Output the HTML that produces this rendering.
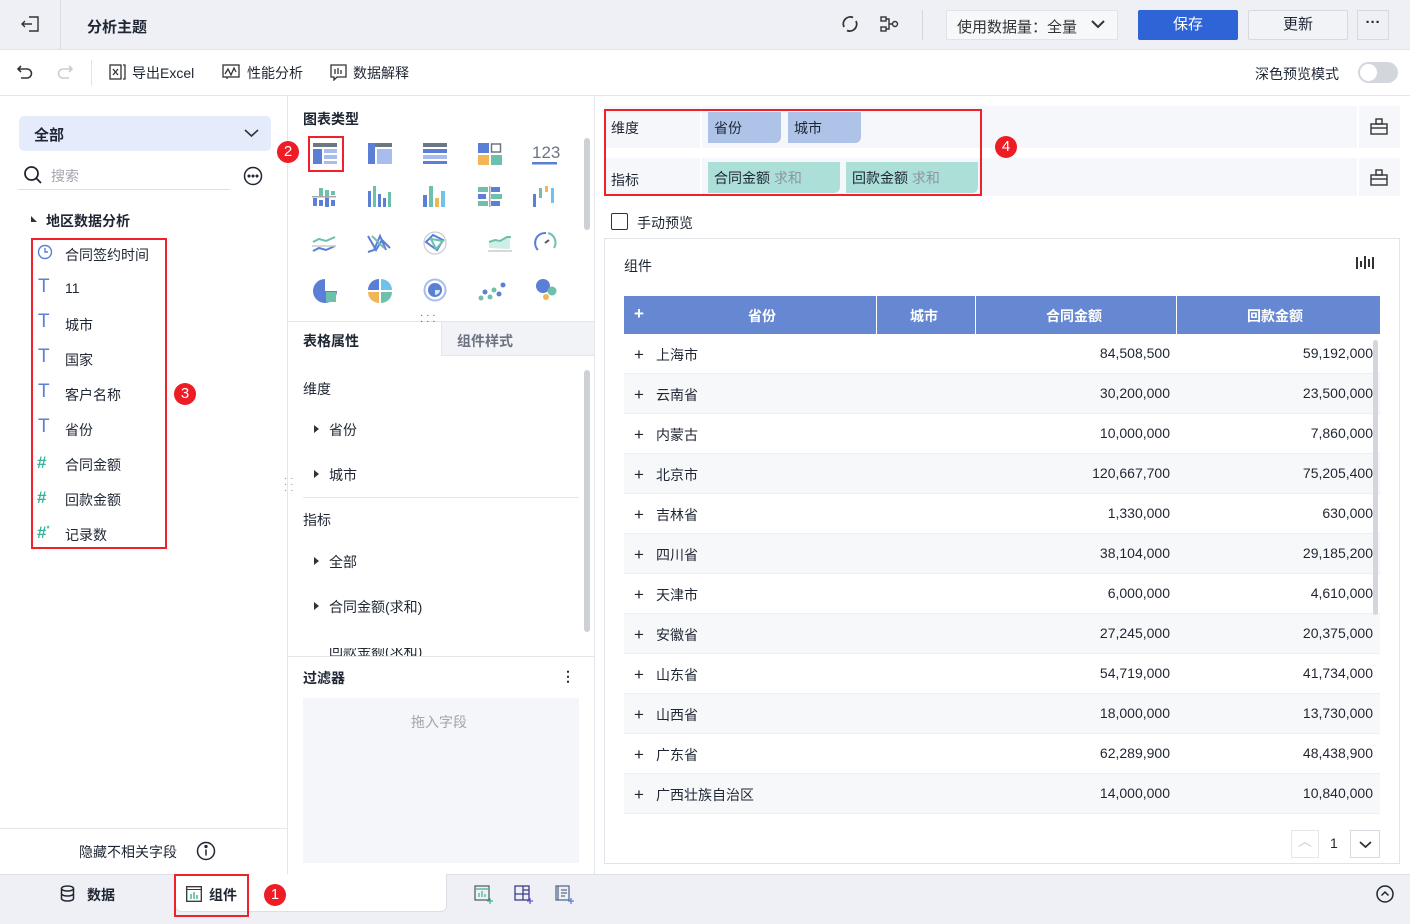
<!DOCTYPE html>
<html><head><meta charset="utf-8"><style>
*{box-sizing:border-box;margin:0;padding:0}
body{width:1410px;height:924px;position:relative;overflow:hidden;background:#fff;font-family:"Liberation Sans","Noto Sans CJK SC",sans-serif;font-size:14px;color:#1f2633}
.a{position:absolute}
.b{font-weight:bold}
.red{border:2px solid #f0212b}
.badge{position:absolute;width:22px;height:22px;border-radius:50%;background:#ee1c25;color:#fff;font-size:15px;text-align:center;line-height:22px}
.row{position:absolute;left:624px;width:756px;height:40px;border-bottom:1px solid #eceef2}
.row span{position:absolute;top:11px}
.row .p{left:10px;font-size:17px;line-height:18px;top:12px}
.row .n{left:32px}
</style></head><body>
<div class="a" style="left:0;top:0;width:1410px;height:50px;background:#eef0f5;border-bottom:1px solid #e0e3ea"></div>
<div class="a" style="left:60px;top:0;width:1px;height:50px;background:#d9dce3"></div>
<svg class="a" style="left:20px;top:14px" width="22" height="20" viewBox="0 0 22 20" fill="none" stroke="#333" stroke-width="1.4"><path d="M9 3h9v14H9M12 10H2M5 7l-3 3 3 3"/></svg>
<div class="a b" style="left:87px;top:16px;font-size:15px">分析主题</div>
<svg class="a" style="left:840px;top:14px" width="20" height="20" viewBox="0 0 20 20" fill="none" stroke="#333" stroke-width="1.8"><path d="M4 13A7 7 0 0 1 13 3.5M16 7A7 7 0 0 1 7 16.5"/></svg>
<svg class="a" style="left:880px;top:15px" width="20" height="18" viewBox="0 0 20 18" fill="none" stroke="#333" stroke-width="1.4"><rect x="1" y="2" width="5" height="4"/><rect x="1" y="12" width="5" height="4"/><circle cx="15" cy="9" r="2.5"/><path d="M6 4h3v10H6M9 9h3.5"/></svg>
<div class="a" style="left:922px;top:10px;width:1px;height:30px;background:#d3d6dd"></div>
<div class="a" style="left:946px;top:10px;width:172px;height:30px;background:#f7f8fa;border:1px solid #dfe2e8;border-radius:2px;padding:5px 10px;font-size:15px;color:#333">使用数据量：全量<svg style="position:absolute;right:12px;top:9px" width="14" height="9" viewBox="0 0 14 9" fill="none" stroke="#333" stroke-width="2"><path d="M1 1l6 6 6-6"/></svg></div>
<div class="a" style="left:1138px;top:10px;width:100px;height:30px;background:#2f64d7;border-radius:2px;color:#fff;text-align:center;line-height:30px;font-size:15px">保存</div>
<div class="a" style="left:1248px;top:10px;width:100px;height:30px;background:#f2f3f6;border:1px solid #d6d9df;border-radius:2px;text-align:center;line-height:28px;font-size:15px">更新</div>
<div class="a" style="left:1357px;top:10px;width:32px;height:30px;border:1px solid #d6d9df;text-align:center;line-height:24px;font-size:15px;font-weight:bold">···</div>
<div class="a" style="left:0;top:95px;width:1410px;height:1px;background:#e4e6eb"></div>
<svg class="a" style="left:16px;top:64px" width="18" height="16" viewBox="0 0 18 16" fill="none" stroke="#333" stroke-width="1.6"><path d="M5 2L2 5l3 3M2 5h9a4.5 4.5 0 0 1 0 9H5"/></svg>
<svg class="a" style="left:56px;top:64px" width="18" height="16" viewBox="0 0 18 16" fill="none" stroke="#c8ccd3" stroke-width="1.6"><path d="M13 2l3 3-3 3M16 5H7a4.5 4.5 0 0 0 0 9h6"/></svg>
<div class="a" style="left:91px;top:60px;width:1px;height:26px;background:#e1e3e8"></div>
<svg class="a" style="left:109px;top:64px" width="17" height="16" viewBox="0 0 17 16" fill="none" stroke="#333" stroke-width="1.3"><rect x="1" y="1" width="11" height="14"/><path d="M4 5l5 6M9 5l-5 6M14 1h2v14h-2"/></svg>
<div class="a" style="left:132px;top:63px">导出Excel</div>
<svg class="a" style="left:222px;top:64px" width="18" height="16" viewBox="0 0 18 16" fill="none" stroke="#333" stroke-width="1.3"><rect x="1" y="1" width="16" height="12"/><path d="M3 10l3-5 3 6 3-7 2 4M5 13v2"/></svg>
<div class="a" style="left:247px;top:63px">性能分析</div>
<svg class="a" style="left:330px;top:64px" width="17" height="17" viewBox="0 0 17 17" fill="none" stroke="#333" stroke-width="1.3"><path d="M1 1h15v12H7l-3 3v-3H1z"/><path d="M5 5v5M8 4v6M11 6v4"/></svg>
<div class="a" style="left:353px;top:63px">数据解释</div>
<div class="a" style="left:1255px;top:64px">深色预览模式</div>
<div class="a" style="left:1358px;top:62px;width:40px;height:21px;border-radius:11px;background:#d3d6dc"><div style="position:absolute;left:2px;top:2px;width:17px;height:17px;border-radius:50%;background:#fff"></div></div>
<div class="a" style="left:287px;top:96px;width:1px;height:778px;background:#e4e6eb"></div>
<div class="a" style="left:19px;top:116px;width:252px;height:35px;background:#e4ecfb;border-radius:5px"></div>
<div class="a b" style="left:34px;top:124px;font-size:15px">全部</div>
<svg class="a" style="left:244px;top:129px" width="15" height="9" viewBox="0 0 15 9" fill="none" stroke="#333" stroke-width="1.6"><path d="M1 1l6.5 6 6.5-6"/></svg>
<svg class="a" style="left:23px;top:165px" width="20" height="20" viewBox="0 0 20 20" fill="none" stroke="#1f2633" stroke-width="1.8"><circle cx="8.5" cy="8.5" r="6.5"/><path d="M13 13l5 5"/></svg>
<div class="a" style="left:51px;top:166px;color:#a0a5ae">搜索</div>
<div class="a" style="left:18px;top:189px;width:212px;height:1px;background:#dde0e6"></div>
<svg class="a" style="left:243px;top:166px" width="20" height="20" viewBox="0 0 20 20" fill="none" stroke="#1f2633" stroke-width="1.5"><circle cx="10" cy="10" r="8.5"/><circle cx="6" cy="10" r=".8" fill="#1f2633"/><circle cx="10" cy="10" r=".8" fill="#1f2633"/><circle cx="14" cy="10" r=".8" fill="#1f2633"/></svg>
<div class="a" style="left:31px;top:216px;width:0;height:0;border-left:6px solid #333;border-top:6px solid transparent"></div>
<div class="a b" style="left:46px;top:211px">地区数据分析</div>
<div class="a red" style="left:31px;top:238px;width:136px;height:311px"></div>
<svg class="a" style="left:37px;top:244px" width="16" height="16" viewBox="0 0 16 16" fill="none" stroke="#5b7fd6" stroke-width="1.4"><circle cx="8" cy="8" r="6.5"/><path d="M8 4v4h3"/></svg>
<div class="a" style="left:65px;top:245px">合同签约时间</div>
<div class="a" style="left:38px;top:276px;color:#5b7fd6;font-size:19px">T</div><div class="a" style="left:65px;top:280px">11</div>
<div class="a" style="left:38px;top:311px;color:#5b7fd6;font-size:19px">T</div><div class="a" style="left:65px;top:315px">城市</div>
<div class="a" style="left:38px;top:346px;color:#5b7fd6;font-size:19px">T</div><div class="a" style="left:65px;top:350px">国家</div>
<div class="a" style="left:38px;top:381px;color:#5b7fd6;font-size:19px">T</div><div class="a" style="left:65px;top:385px">客户名称</div>
<div class="a" style="left:38px;top:416px;color:#5b7fd6;font-size:19px">T</div><div class="a" style="left:65px;top:420px">省份</div>
<div class="a b" style="left:37px;top:453px;color:#3bb39a;font-size:17px">#</div><div class="a" style="left:65px;top:455px">合同金额</div>
<div class="a b" style="left:37px;top:488px;color:#3bb39a;font-size:17px">#</div><div class="a" style="left:65px;top:490px">回款金额</div>
<div class="a b" style="left:37px;top:523px;color:#3bb39a;font-size:17px">#<sup style="font-size:8px">*</sup></div><div class="a" style="left:65px;top:525px">记录数</div>
<div class="badge" style="left:174px;top:383px">3</div>
<div class="a" style="left:284px;top:476px;color:#888;font-size:10px;line-height:6px">· ·<br>· ·<br>· ·</div>
<div class="a" style="left:0;top:828px;width:287px;height:1px;background:#e4e6eb"></div>
<div class="a" style="left:79px;top:842px">隐藏不相关字段</div>
<svg class="a" style="left:196px;top:841px" width="20" height="20" viewBox="0 0 20 20" fill="none" stroke="#1f2633" stroke-width="1.5"><circle cx="10" cy="10" r="8.5"/><path d="M10 8.5v6"/><circle cx="10" cy="5.5" r=".9" fill="#1f2633"/></svg>
<div class="a" style="left:594px;top:96px;width:1px;height:778px;background:#e4e6eb"></div>
<div class="a b" style="left:303px;top:109px">图表类型</div>
<div class="a red" style="left:308px;top:136px;width:36px;height:36px"></div>
<div class="badge" style="left:277px;top:141px">2</div>
<svg class="a" style="left:300px;top:136px" width="270" height="170" viewBox="0 0 270 170">
<g transform="translate(13,7)"><rect width="24" height="4" fill="#6d7685"/><rect y="6" width="9" height="15" fill="#5b7fd6"/><rect x="11" y="6" width="13" height="4" fill="#a8bdee"/><rect x="11" y="12" width="13" height="4" fill="#a8bdee"/><rect x="11" y="18" width="13" height="3" fill="#a8bdee"/></g>
<g transform="translate(68,7)"><rect width="24" height="4" fill="#6d7685"/><rect width="7" height="21" fill="#5b7fd6"/><rect x="9" y="6" width="15" height="15" fill="#a8bdee"/></g>
<g transform="translate(123,7)"><rect width="24" height="4" fill="#6d7685"/><rect y="6" width="24" height="4" fill="#5b7fd6"/><rect y="12" width="24" height="4" fill="#a8bdee"/><rect y="18" width="24" height="3" fill="#5b7fd6"/></g>
<g transform="translate(178,7)"><rect width="11" height="10" fill="#5b7fd6"/><rect x="13.5" y="1" width="9" height="8" fill="none" stroke="#6d7685" stroke-width="1.5"/><rect y="12" width="11" height="10" fill="#f0b658"/><rect x="13" y="12" width="11" height="10" fill="#6cc0ac"/></g>
<text x="232" y="22" font-size="17" fill="#6d7685" font-family="Liberation Sans">123</text><rect x="232" y="26" width="25" height="2.5" fill="#5b7fd6"/>
<g transform="translate(13,50)" fill="#5b7fd6"><rect x="0" y="12" width="4" height="8"/><rect x="6" y="2" width="4" height="8" fill="#6cc0ac"/><rect x="12" y="4" width="4" height="8" fill="#6cc0ac"/><rect x="12" y="12" width="4" height="9"/><rect x="6" y="14" width="4" height="6"/><rect x="-1" y="10" width="24" height="1.5" fill="#aaa"/><rect x="18" y="5" width="4" height="4" fill="#6cc0ac"/><rect x="18" y="14" width="4" height="6"/></g>
<g transform="translate(68,50)"><rect x="0" y="5" width="3" height="16" fill="#5b7fd6"/><rect x="5" y="0" width="3" height="21" fill="#6cc0ac"/><rect x="10" y="8" width="3" height="13" fill="#5b7fd6"/><rect x="15" y="12" width="3" height="9" fill="#5b7fd6"/><rect x="20" y="6" width="3" height="15" fill="#6cc0ac"/></g>
<g transform="translate(123,50)"><rect x="0" y="9" width="4" height="12" fill="#5b7fd6"/><rect x="6" y="0" width="4" height="21" fill="#6cc0ac"/><rect x="12" y="12" width="4" height="9" fill="#f0b658"/><rect x="18" y="5" width="4" height="16" fill="#6fc3ea"/></g>
<g transform="translate(178,51)"><rect width="10" height="5" fill="#6cc0ac"/><rect x="13" width="9" height="5" fill="#5b7fd6"/><rect y="7" width="8" height="5" fill="#5b7fd6"/><rect x="13" y="7" width="11" height="5" fill="#6cc0ac"/><rect y="14" width="10" height="5" fill="#6cc0ac"/><rect x="13" y="14" width="9" height="5" fill="#5b7fd6"/><rect x="11" y="-1" width="1.5" height="21" fill="#aaa"/></g>
<g transform="translate(233,50)"><rect x="0" y="8" width="3" height="13" fill="#5b7fd6"/><rect x="6" y="2" width="3" height="10" fill="#6cc0ac"/><rect x="12" y="0" width="3" height="6" fill="#f0b658"/><rect x="18" y="2" width="3" height="15" fill="#6fc3ea"/></g>
<g fill="none" stroke-width="2"><path d="M13 106l6-3 7 2 9-4" stroke="#6cc0ac"/><path d="M13 115l6-3 7 2 9-4" stroke="#5b7fd6"/><path d="M12 110h24" stroke="#ccc" stroke-width="1.5"/>
<path d="M68 100l8 14 6-10 8 8M68 116l6-2 6-14 6 14" stroke="#5b7fd6"/><path d="M72 100l12 12" stroke="#6cc0ac"/>
<circle cx="135" cy="107" r="11" stroke="#ccc" stroke-width="1.2"/><path d="M126 106l7-7 10 5-6 10z" stroke="#5b7fd6"/><path d="M131 103l12 2-7 8z" stroke="#6cc0ac"/>
<path d="M189 112v-5l5-2 5 1 7-4 4 0v11z" fill="#cfeee6" stroke="none"/><path d="M189 106l6-2 5 1 7-4 4 0" stroke="#6cc0ac"/><path d="M188 115h24" stroke="#ccc" stroke-width="1.5"/>
<path d="M238 114a10 10 0 0 1 8-17" stroke="#5b7fd6"/><path d="M248 97a10 10 0 0 1 6 15" stroke="#6cc0ac"/><path d="M245 107l4-3" stroke="#555"/></g>
<g transform="translate(13,143)"><path d="M12 0A12 12 0 1 0 24 12H12z" fill="#5b7fd6"/><rect x="13" y="13" width="10" height="10" fill="#6cc0ac"/></g>
<g transform="translate(68,143)"><path d="M11 0v11H0A11 11 0 0 1 11 0" fill="#5b7fd6"/><path d="M13 0a11 11 0 0 1 11 11H13z" fill="#6fc3ea"/><path d="M0 13h11v11A11 11 0 0 1 0 13" fill="#f0b658"/><path d="M13 13h11a11 11 0 0 1-11 11z" fill="#6cc0ac"/></g>
<g transform="translate(124,143)" fill="none"><circle cx="11" cy="11" r="10.5" stroke="#a8bdee" stroke-width="2"/><circle cx="11" cy="11" r="7" fill="#5b7fd6"/><path d="M11 11h5a5 5 0 0 1-5 5z" fill="#cfeee6"/></g>
<g fill="#5b7fd6"><circle cx="181" cy="162" r="2.5" fill="#6cc0ac"/><circle cx="185" cy="156" r="2.5"/><circle cx="190" cy="161" r="2.5" fill="#6cc0ac"/><circle cx="194" cy="154" r="2.5" fill="#6cc0ac"/><circle cx="199" cy="158" r="2.5"/><circle cx="203" cy="149" r="2.5"/></g>
<circle cx="243" cy="150" r="7" fill="#5b7fd6"/><circle cx="252" cy="155" r="4.5" fill="#6cc0ac"/><circle cx="246" cy="161" r="3" fill="#f0b658"/>
</svg>
<div class="a" style="left:584px;top:138px;width:6px;height:92px;border-radius:3px;background:#cdd0d6"></div>
<div class="a" style="left:288px;top:321px;width:306px;height:1px;background:#e4e6eb"></div>
<div class="a" style="left:420px;top:313px;color:#555;font-size:10px;line-height:6px">· · ·<br>· · ·</div>
<div class="a" style="left:441px;top:322px;width:153px;height:34px;background:#f1f3f7;border-left:1px solid #e4e6eb;border-bottom:1px solid #e4e6eb"></div>
<div class="a b" style="left:303px;top:331px">表格属性</div>
<div class="a b" style="left:457px;top:331px;color:#6d7280">组件样式</div>
<div class="a" style="left:303px;top:379px">维度</div>
<div class="a" style="left:314px;top:425px;border-left:5px solid #333;border-top:4px solid transparent;border-bottom:4px solid transparent"></div><div class="a" style="left:329px;top:420px">省份</div>
<div class="a" style="left:314px;top:470px;border-left:5px solid #333;border-top:4px solid transparent;border-bottom:4px solid transparent"></div><div class="a" style="left:329px;top:465px">城市</div>
<div class="a" style="left:303px;top:497px;width:276px;height:1px;background:#e4e6eb"></div>
<div class="a" style="left:303px;top:510px">指标</div>
<div class="a" style="left:314px;top:557px;border-left:5px solid #333;border-top:4px solid transparent;border-bottom:4px solid transparent"></div><div class="a" style="left:329px;top:552px">全部</div>
<div class="a" style="left:314px;top:602px;border-left:5px solid #333;border-top:4px solid transparent;border-bottom:4px solid transparent"></div><div class="a" style="left:329px;top:597px">合同金额(求和)</div>
<div class="a" style="left:314px;top:648px;width:160px;height:9px;overflow:hidden"><div style="position:absolute;top:-7px;left:15px">回款金额(求和)</div></div>
<div class="a" style="left:584px;top:370px;width:6px;height:262px;border-radius:3px;background:#cdd0d6"></div>
<div class="a" style="left:288px;top:656px;width:306px;height:1px;background:#e4e6eb"></div>
<div class="a b" style="left:303px;top:668px">过滤器</div>
<div class="a b" style="left:561px;top:668px">⋮</div>
<div class="a" style="left:303px;top:698px;width:276px;height:165px;background:#f5f6fa"></div>
<div class="a" style="left:411px;top:712px;color:#a0a5ae">拖入字段</div>
<div class="a" style="left:605px;top:106px;width:752px;height:42px;background:#f6f7fb"></div>
<div class="a" style="left:605px;top:158px;width:752px;height:38px;background:#f6f7fb"></div>
<div class="a" style="left:1359px;top:106px;width:41px;height:42px;background:#f6f7fb"></div>
<div class="a" style="left:1359px;top:158px;width:41px;height:38px;background:#f6f7fb"></div>
<div class="a" style="left:700px;top:106px;width:2px;height:90px;background:#fff"></div>
<div class="a" style="left:611px;top:118px">维度</div>
<div class="a" style="left:611px;top:170px">指标</div>
<div class="a" style="left:708px;top:112px;width:73px;height:31px;background:#adc3e8;border-radius:0 0 6px 0;padding:6px 6px">省份</div>
<div class="a" style="left:788px;top:112px;width:73px;height:31px;background:#adc3e8;border-radius:0 0 6px 0;padding:6px 6px">城市</div>
<div class="a" style="left:708px;top:162px;width:132px;height:31px;background:#abdfd8;border-radius:0 0 6px 0;padding:6px 6px">合同金额 <span style="color:#8e959e">求和</span></div>
<div class="a" style="left:846px;top:162px;width:132px;height:31px;background:#abdfd8;border-radius:0 0 6px 0;padding:6px 6px">回款金额 <span style="color:#8e959e">求和</span></div>
<div class="a red" style="left:604px;top:109px;width:378px;height:87px"></div>
<div class="badge" style="left:995px;top:136px">4</div>
<svg class="a" style="left:1370px;top:118px" width="18" height="17" viewBox="0 0 18 17" fill="none" stroke="#333" stroke-width="1.4"><rect x="1" y="6" width="16" height="10"/><rect x="6" y="1" width="6" height="5"/><path d="M1 10h16"/></svg>
<svg class="a" style="left:1370px;top:169px" width="18" height="17" viewBox="0 0 18 17" fill="none" stroke="#333" stroke-width="1.4"><rect x="1" y="6" width="16" height="10"/><rect x="6" y="1" width="6" height="5"/><path d="M1 10h16"/></svg>
<div class="a" style="left:611px;top:213px;width:17px;height:17px;border:1.5px solid #333;border-radius:2px"></div>
<div class="a" style="left:637px;top:213px">手动预览</div>
<div class="a" style="left:604px;top:238px;width:796px;height:626px;border:1px solid #e1e3e8"></div>
<div class="a" style="left:624px;top:256px">组件</div>
<svg class="a" style="left:1356px;top:255px" width="18" height="16" viewBox="0 0 18 16" fill="#333"><rect x="0" y="2" width="2" height="12"/><rect x="16" y="2" width="2" height="12"/><rect x="4" y="6" width="2" height="6"/><rect x="8" y="1" width="2" height="13"/><rect x="12" y="4" width="2" height="8"/></svg>
<div class="a" style="left:624px;top:296px;width:756px;height:38px;background:#6688d2;color:#fff;font-weight:bold">
<span style="position:absolute;left:10px;top:8px;font-size:17px">+</span>
<span style="position:absolute;left:124px;top:10px">省份</span>
<span style="position:absolute;left:286px;top:10px">城市</span>
<span style="position:absolute;left:422px;top:10px">合同金额</span>
<span style="position:absolute;left:623px;top:10px">回款金额</span>
<div style="position:absolute;left:252px;top:0;width:1px;height:38px;background:#fff"></div>
<div style="position:absolute;left:351px;top:0;width:1px;height:38px;background:#fff"></div>
<div style="position:absolute;left:552px;top:0;width:1px;height:38px;background:#fff"></div>
</div>
<div class="a" style="left:624px;top:334px;width:756px;height:490px;overflow:hidden">
<div style="position:relative">
<div class="row" style="left:0;top:0;background:#fff"><span class="p">+</span><span class="n">上海市</span><span style="right:210px">84,508,500</span><span style="right:7px">59,192,000</span></div>
<div class="row" style="left:0;top:40px;background:#f7f8fa"><span class="p">+</span><span class="n">云南省</span><span style="right:210px">30,200,000</span><span style="right:7px">23,500,000</span></div>
<div class="row" style="left:0;top:80px;background:#fff"><span class="p">+</span><span class="n">内蒙古</span><span style="right:210px">10,000,000</span><span style="right:7px">7,860,000</span></div>
<div class="row" style="left:0;top:120px;background:#f7f8fa"><span class="p">+</span><span class="n">北京市</span><span style="right:210px">120,667,700</span><span style="right:7px">75,205,400</span></div>
<div class="row" style="left:0;top:160px;background:#fff"><span class="p">+</span><span class="n">吉林省</span><span style="right:210px">1,330,000</span><span style="right:7px">630,000</span></div>
<div class="row" style="left:0;top:200px;background:#f7f8fa"><span class="p">+</span><span class="n">四川省</span><span style="right:210px">38,104,000</span><span style="right:7px">29,185,200</span></div>
<div class="row" style="left:0;top:240px;background:#fff"><span class="p">+</span><span class="n">天津市</span><span style="right:210px">6,000,000</span><span style="right:7px">4,610,000</span></div>
<div class="row" style="left:0;top:280px;background:#f7f8fa"><span class="p">+</span><span class="n">安徽省</span><span style="right:210px">27,245,000</span><span style="right:7px">20,375,000</span></div>
<div class="row" style="left:0;top:320px;background:#fff"><span class="p">+</span><span class="n">山东省</span><span style="right:210px">54,719,000</span><span style="right:7px">41,734,000</span></div>
<div class="row" style="left:0;top:360px;background:#f7f8fa"><span class="p">+</span><span class="n">山西省</span><span style="right:210px">18,000,000</span><span style="right:7px">13,730,000</span></div>
<div class="row" style="left:0;top:400px;background:#fff"><span class="p">+</span><span class="n">广东省</span><span style="right:210px">62,289,900</span><span style="right:7px">48,438,900</span></div>
<div class="row" style="left:0;top:440px;background:#f7f8fa"><span class="p">+</span><span class="n">广西壮族自治区</span><span style="right:210px">14,000,000</span><span style="right:7px">10,840,000</span></div>
</div></div>
<div class="a" style="left:1373px;top:340px;width:5px;height:275px;border-radius:3px;background:#d3d6dc"></div>
<div class="a" style="left:1291px;top:830px;width:28px;height:28px;border:1px solid #e5e7eb;text-align:center;color:#ccc">︿</div>
<div class="a" style="left:1330px;top:835px">1</div>
<div class="a" style="left:1350px;top:830px;width:30px;height:28px;border:1px solid #d6d9df"><svg style="position:absolute;left:8px;top:10px" width="13" height="8" viewBox="0 0 13 8" fill="none" stroke="#333" stroke-width="1.8"><path d="M1 1l5.5 5 5.5-5"/></svg></div>
<div class="a" style="left:0;top:874px;width:1410px;height:50px;background:#eef0f5;border-top:1px solid #dcdfe5"></div>
<div class="a" style="left:175px;top:874px;width:272px;height:38px;background:#fff;border-radius:0 0 6px 6px;border:1px solid #dcdfe5;border-top:none"></div>
<svg class="a" style="left:60px;top:885px" width="15" height="17" viewBox="0 0 15 17" fill="none" stroke="#1f2633" stroke-width="1.5"><ellipse cx="7.5" cy="3.5" rx="6" ry="2.5"/><path d="M1.5 3.5v10c0 1.4 2.7 2.5 6 2.5s6-1.1 6-2.5v-10M1.5 8.5c0 1.4 2.7 2.5 6 2.5s6-1.1 6-2.5"/></svg>
<div class="a b" style="left:87px;top:885px">数据</div>
<div class="a red" style="left:174px;top:874px;width:75px;height:43px"></div>
<svg class="a" style="left:186px;top:886px" width="16" height="16" viewBox="0 0 16 16" fill="none"><rect x=".7" y=".7" width="14.6" height="14.6" stroke="#333" stroke-width="1.3"/><path d="M.7 3.5h14.6" stroke="#333"/><path d="M5 13V8M8 13V6M11 13V9" stroke="#3bb39a" stroke-width="1.4"/></svg>
<div class="a b" style="left:209px;top:885px">组件</div>
<div class="badge" style="left:264px;top:884px">1</div>
<svg class="a" style="left:474px;top:885px" width="20" height="19" viewBox="0 0 20 19" fill="none" stroke="#555" stroke-width="1.2"><rect x="1" y="1" width="14" height="14"/><path d="M1 4h14M5 12V8M8 12V6M11 12V9" stroke="#3bb39a"/><path d="M16 13v6M13 16h6" stroke="#3bb39a"/></svg>
<svg class="a" style="left:514px;top:885px" width="20" height="19" viewBox="0 0 20 19" fill="none" stroke="#3c3d8a" stroke-width="1.3"><rect x="1" y="1" width="14" height="14"/><path d="M1 9h14M9 1v14M9 5h6"/><path d="M16 13v6M13 16h6" stroke="#6a5bd0"/></svg>
<svg class="a" style="left:555px;top:885px" width="20" height="19" viewBox="0 0 20 19" fill="none" stroke="#5b6b86" stroke-width="1.3"><rect x="1" y="1" width="13" height="14"/><path d="M3 1v14M6 5h6M6 8h6M6 11h4"/><path d="M16 13v6M13 16h6" stroke="#5b7fd6"/></svg>
<svg class="a" style="left:1376px;top:885px" width="18" height="18" viewBox="0 0 18 18" fill="none" stroke="#1f2633" stroke-width="1.5"><circle cx="9" cy="9" r="8"/><path d="M5.5 10.5L9 7l3.5 3.5"/></svg>
</body></html>
